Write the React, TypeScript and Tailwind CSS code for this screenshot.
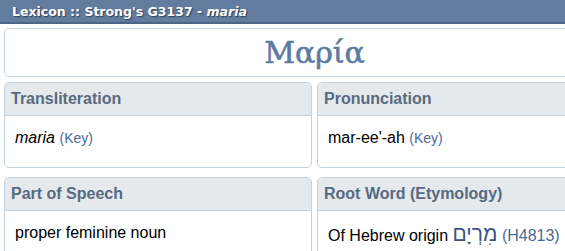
const CARDS = [
  {
    title: "Transliteration",
    body: (
      <>
        <i>maria</i> <span className="text-[14px] text-[#4a6a9c]">(Key)</span>
      </>
    ),
  },
  {
    title: "Pronunciation",
    body: (
      <>
        mar-ee'-ah <span className="text-[14px] text-[#4a6a9c]">(Key)</span>
      </>
    ),
  },
  {
    title: "Part of Speech",
    body: <>proper feminine noun</>,
  },
  {
    title: "Root Word (Etymology)",
    body: (
      <>
        Of Hebrew origin{" "}
        <span
          dir="rtl"
          className="text-[21px] leading-none text-[#3b5280]"
        >
          מִרְיָם
        </span>{" "}
        <span className="text-[#4a6a9c]">(H4813)</span>
      </>
    ),
  },
];

export default function App() {
  return (
    <div className="w-full overflow-hidden bg-white">
      <div className="w-[629px] [font-family:'Liberation_Sans',Arial,sans-serif]">
        <div className="h-[24px] border-b-2 border-[#4d6488] bg-[#627b9f] pl-[12px] pt-[3px] text-[12.5px] font-bold text-white [font-family:'DejaVu_Sans',Verdana,sans-serif] [text-shadow:1px_1px_1px_#2f3f58]">
          Lexicon :: Strong's G3137 - <i>maria</i>
        </div>

        <div className="mx-[4px] mt-[4px] flex h-[49px] items-center justify-center rounded-[5px] border border-[#c4d2e0] bg-white">
          <span className="text-[30px] leading-none text-[#5d7aa0] [font-family:'DejaVu_Serif',Georgia,serif] [-webkit-text-stroke:0.6px_#5d7aa0]">
            Μαρία
          </span>
        </div>

        <div className="mx-[4px] mt-[5px] grid grid-cols-2 gap-x-[5px] gap-y-[9px]">
          {CARDS.map((card) => (
            <div
              key={card.title}
              className="overflow-hidden rounded-[5px] border border-[#c4d2e0] bg-white"
            >
              <div className="flex h-[33px] items-center border-b border-[#c4d2e0] bg-[#e4e9ee] px-[6px] text-[16px] font-bold text-[#586a7f]">
                {card.title}
              </div>
              <div className="h-[51px] px-[10px] pt-[12px] text-[16px] leading-[20px] text-black">
                {card.body}
              </div>
            </div>
          ))}
        </div>
      </div>
    </div>
  );
}
